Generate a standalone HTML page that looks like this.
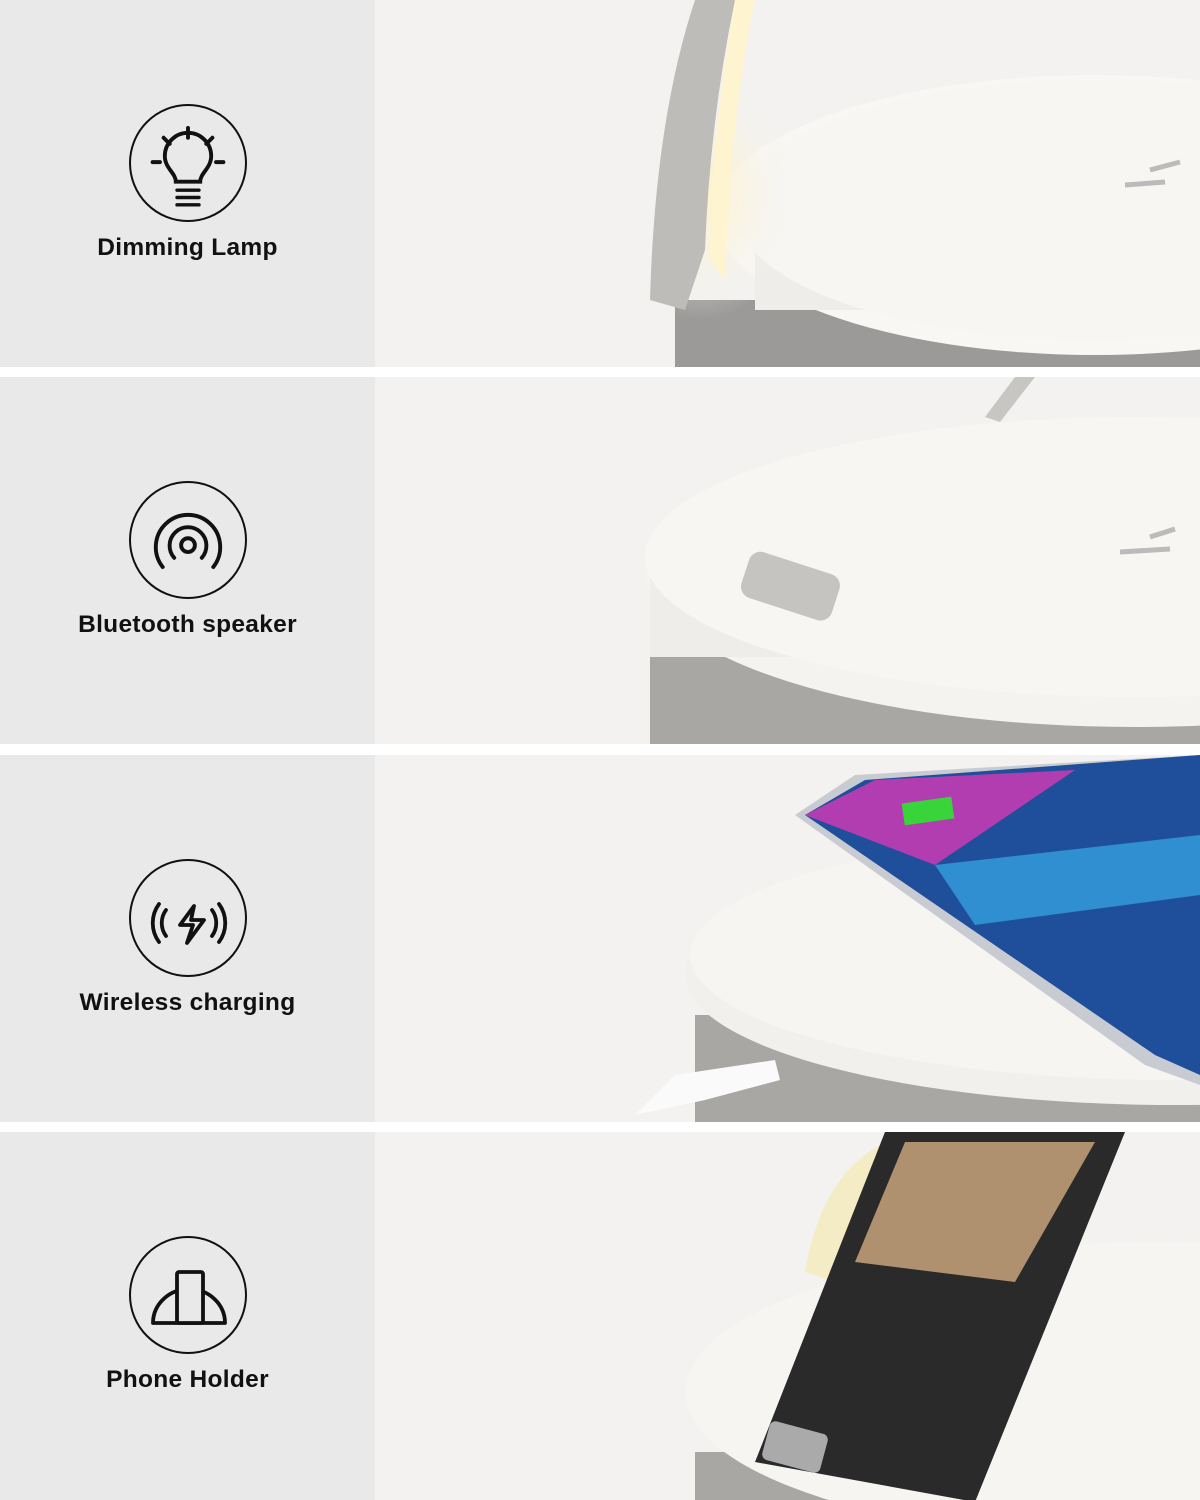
<!DOCTYPE html>
<html><head><meta charset="utf-8"><style>
body{margin:0;width:1200px;height:1500px;background:#fff;position:relative;overflow:hidden;font-family:"Liberation Sans",sans-serif}
.p{position:absolute;left:0;width:1200px;height:367px;background:#f3f2f0;overflow:hidden}
.l{position:absolute;left:0;top:0;width:375px;height:100%;background:#e9e9e9}
.c{position:absolute;left:129px;top:104px;width:118px;height:118px;border:2px solid #111;border-radius:50%;box-sizing:border-box}
.c svg{position:absolute;left:1px;top:1px}
.t{position:absolute;left:0;width:375px;top:234px;text-align:center;font-size:24.5px;font-weight:bold;color:#111;letter-spacing:0.3px}
.r{position:absolute;left:375px;top:0}
</style></head><body>

<div class="p" style="top:0">
<svg class="r" width="825" height="367"><defs><radialGradient id="g1" cx="0.1" cy="0.6" r="0.4"><stop offset="0" stop-color="#fff3c8"/><stop offset="1" stop-color="#f3f2f0" stop-opacity="0"/></radialGradient></defs>
<rect x="300" y="300" width="525" height="67" fill="#9c9a98"/>
<ellipse cx="720" cy="215" rx="380" ry="140" fill="#f8f7f4"/>
<rect x="380" y="230" width="445" height="80" fill="#eeede9"/>
<ellipse cx="720" cy="210" rx="360" ry="130" fill="#f7f6f3"/>
<rect x="300" y="0" width="250" height="320" fill="url(#g1)"/>
<path d="M320 0 L360 0 Q335 120 330 250 L310 310 L275 300 Q280 120 320 0Z" fill="#bdbcb8"/>
<path d="M360 0 Q338 120 335 260 L350 280 Q355 120 380 0Z" fill="#fff4d0"/>
<path d="M775 170 l30 -8 M750 185 l40 -3" stroke="#bbb" stroke-width="5"/>
</svg>
<div class="l"></div>
<div class="c"><svg width="112" height="112" viewBox="0 0 112 112" fill="none" stroke="#111" stroke-width="3.2" stroke-linecap="round"><g transform="translate(56 60) scale(1.22) translate(-56 -60)"><path d="M56 28v8M36 36l5 5M76 36l-5 5M27 56h6M85 56h-6"/><path d="M46 72c0-7-9-11-9-21a19 19 0 0 1 38 0c0 10-9 14-9 21z"/><path d="M47 79h18M47 85h18M47 91h18" stroke-width="2.8"/></g></svg></div>
<div class="t">Dimming Lamp</div>
</div>

<div class="p" style="top:377px">
<svg class="r" width="825" height="367">
<rect x="275" y="250" width="550" height="117" fill="#a9a7a4"/>
<ellipse cx="760" cy="195" rx="490" ry="155" fill="#f4f3f0"/>
<rect x="275" y="190" width="550" height="90" fill="#eeede9"/>
<ellipse cx="760" cy="180" rx="490" ry="140" fill="#f7f6f3"/>
<path d="M610 40 L640 0 L660 0 L625 45Z" fill="#c8c6c2"/>
<rect x="368" y="185" width="95" height="48" rx="12" fill="#c6c4c0" transform="rotate(18 415 209)"/>
<path d="M745 175 l50 -3 M775 160 l25 -8" stroke="#bbb" stroke-width="5"/>
</svg>
<div class="l"></div>
<div class="c"><svg width="112" height="112" viewBox="0 0 112 112" fill="none" stroke="#111" stroke-width="3.4" stroke-linecap="round"><g transform="translate(56 60) scale(1.15) translate(-57 -60)"><circle cx="57" cy="61" r="6"/><path d="M45 72a16 16 0 1 1 24 0"/><path d="M35 80a28 28 0 1 1 44 0"/></g></svg></div>
<div class="t">Bluetooth speaker</div>
</div>

<div class="p" style="top:755px">
<svg class="r" width="825" height="367">
<rect x="320" y="260" width="505" height="107" fill="#a9a7a4"/>
<ellipse cx="800" cy="220" rx="490" ry="130" fill="#f1f0ec"/>
<ellipse cx="800" cy="200" rx="485" ry="125" fill="#f6f5f2"/>
<path d="M420 60 L480 20 L825 0 L825 330 L770 310 Z" fill="#c8ccd2"/>
<path d="M430 60 L490 25 L825 0 L825 320 L780 300 Z" fill="#1f4f9a"/>
<path d="M430 60 L500 25 L700 15 L560 110 Z" fill="#b23db0"/>
<path d="M560 110 L825 80 L825 140 L600 170Z" fill="#2f8fd0"/>
<rect x="528" y="45" width="50" height="22" fill="#39d43a" transform="rotate(-8 553 56)"/>
<path d="M260 360 L300 320 L400 305 L405 325 L330 345Z" fill="#fafafa"/>
</svg>
<div class="l"></div>
<div class="c"><svg width="112" height="112" viewBox="0 0 112 112" fill="none" stroke="#111" stroke-width="3.8" stroke-linecap="round" stroke-linejoin="round"><path d="M62 44L48 63h13l-6 18 17-23H59z"/><path d="M34 48a22 22 0 0 0 0 26M27 42a32 32 0 0 0 0 38M80 48a22 22 0 0 1 0 26M87 42a32 32 0 0 1 0 38"/></svg></div>
<div class="t">Wireless charging</div>
</div>

<div class="p" style="top:1132px;height:368px">
<svg class="r" width="825" height="368">
<path d="M430 140 Q450 20 540 0 L560 0 Q480 30 460 150Z" fill="#f4ecc4"/>
<rect x="320" y="320" width="505" height="48" fill="#a9a7a4"/>
<ellipse cx="780" cy="260" rx="470" ry="150" fill="#f6f5f2"/>
<path d="M510 0 L750 0 L600 370 L380 330 Z" fill="#2a2a2a"/>
<path d="M530 10 L720 10 L640 150 L480 130Z" fill="#b0916f"/>
<rect x="390" y="295" width="60" height="40" rx="6" fill="#aaa" transform="rotate(15 420 315)"/>
</svg>
<div class="l"></div>
<div class="c"><svg width="112" height="112" viewBox="0 0 112 112" fill="none" stroke="#111" stroke-width="3.8" stroke-linejoin="round"><path d="M21 84a36 34 0 0 1 72 0z"/><rect x="45" y="33" width="26" height="51" rx="2" fill="#e9e9e9"/></svg></div>
<div class="t">Phone Holder</div>
</div>

</body></html>
